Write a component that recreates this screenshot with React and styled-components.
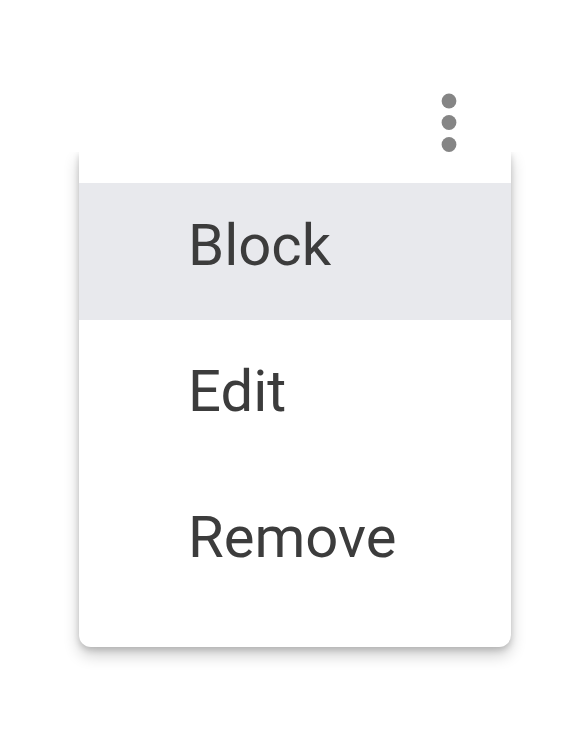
import React from "react";
import styled, { createGlobalStyle } from "styled-components";

const Global = createGlobalStyle`
  html, body { margin: 0; padding: 0; background: #ffffff; }
  body { font-family: Roboto, "Liberation Sans", Arial, sans-serif; }
`;

const Page = styled.div`
  width: 586px;
  height: 755px;
  padding-top: 93px;
  box-sizing: border-box;
  display: flex;
  flex-direction: column;
`;

const Toolbar = styled.div`
  display: flex;
  justify-content: flex-end;
  padding-right: 129px;
  height: 59px;
`;

const KebabButton = styled.button`
  border: 0;
  background: transparent;
  padding: 0;
  width: 16px;
  height: 59px;
  display: flex;
  cursor: pointer;
`;

const Menu = styled.ul`
  list-style: none;
  margin: 0 0 0 79px;
  padding: 31px 0 35px;
  width: 432px;
  box-sizing: border-box;
  background: #ffffff;
  border-radius: 0 0 12px 12px;
  box-shadow: 0 8px 16px rgba(0, 0, 0, 0.2), 0 3px 6px rgba(0, 0, 0, 0.16);
  clip-path: inset(0 -30px -40px -30px);
  display: flex;
  flex-direction: column;
  gap: 9px;
`;

const Item = styled.li`
  height: 137px;
  box-sizing: border-box;
  padding: 28px 0 0 109px;
  font-size: 58px;
  line-height: 68px;
  color: #3c3c3c;
  background: ${(p) => (p.$active ? "#e8e9ed" : "transparent")};
  cursor: pointer;
`;

function KebabIcon() {
  return (
    <svg width="16" height="59" viewBox="0 0 16 59">
      <circle cx="8" cy="8" r="7.4" fill="#858585" />
      <circle cx="8" cy="29.5" r="7.4" fill="#858585" />
      <circle cx="8" cy="51.5" r="7.4" fill="#858585" />
    </svg>
  );
}

export default function App() {
  const items = ["Block", "Edit", "Remove"];
  return (
    <>
      <Global />
      <Page>
        <Toolbar>
          <KebabButton aria-label="More options">
            <KebabIcon />
          </KebabButton>
        </Toolbar>
        <Menu>
          {items.map((it, i) => (
            <Item key={it} $active={i === 0}>
              {it}
            </Item>
          ))}
        </Menu>
      </Page>
    </>
  );
}
